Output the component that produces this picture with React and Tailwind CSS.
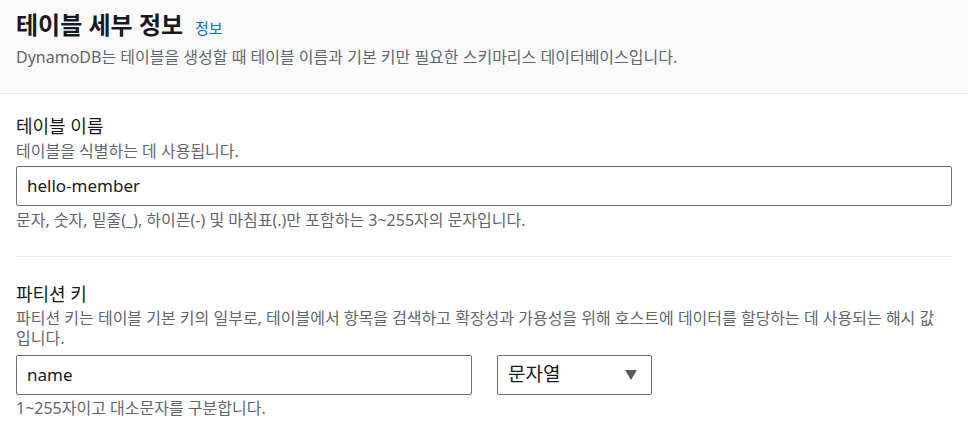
import React from "react";

function Caret() {
  return (
    <svg width="12" height="10" viewBox="0 0 12 10" className="shrink-0">
      <polygon points="0,0 12,0 6,10" fill="#545b64" />
    </svg>
  );
}

export default function App() {
  return (
    <div
      className="w-[968px] h-[430px] bg-white text-[#16191f] overflow-hidden"
      style={{ fontFamily: '"Noto Sans", "Noto Sans CJK KR", sans-serif' }}
    >
      {/* 헤더 */}
      <div className="bg-[#fafafa] border-b border-[#eaeded] px-4 pt-[11px] pb-[26px]">
        <div className="flex items-baseline gap-3">
          <h2 className="text-[24px] leading-[28px] font-bold">테이블 세부 정보</h2>
          <span className="text-[15px] text-[#0073bb]">정보</span>
        </div>
        <p className="mt-[7px] text-[16px] leading-[20px] text-[#5f6670]">
          DynamoDB는 테이블을 생성할 때 테이블 이름과 기본 키만 필요한 스키마리스 데이터베이스입니다.
        </p>
      </div>

      {/* 본문 */}
      <div className="px-4 pt-5">
        <div>
          <div className="text-[18px] leading-[24px]">테이블 이름</div>
          <div className="mt-[3px] text-[16px] leading-[20px] text-[#5f6670]">
            테이블을 식별하는 데 사용됩니다.
          </div>
          <div className="mt-[5px] h-10 border border-[#687078] rounded-[2px] flex items-center px-[10px] text-[17px]">
            hello-member
          </div>
          <div className="mt-1 text-[16px] leading-[20px] text-[#5f6670]">
            문자, 숫자, 밑줄(_), 하이픈(-) 및 마침표(.)만 포함하는 3~255자의 문자입니다.
          </div>
        </div>

        <div className="mt-[26px] border-t border-[#eaeded]"></div>

        <div className="mt-[25px]">
          <div className="text-[18px] leading-[24px]">파티션 키</div>
          <div className="mt-[2px] text-[16px] leading-[20px] text-[#5f6670]">
            파티션 키는 테이블 기본 키의 일부로, 테이블에서 항목을 검색하고 확장성과 가용성을 위해 호스트에 데이터를 할당하는 데 사용되는 해시 값 입니다.
          </div>
          <div className="mt-[7px] flex gap-[25px]">
            <div className="w-[456px] h-10 border border-[#687078] rounded-[2px] flex items-center px-[10px] text-[17px]">
              name
            </div>
            <div className="w-[155px] h-10 border border-[#687078] rounded-[2px] flex items-center justify-between pl-[10px] pr-[14px] text-[19px]">
              <span>문자열</span>
              <Caret />
            </div>
          </div>
          <div className="mt-[3px] text-[16px] leading-[20px] text-[#5f6670]">
            1~255자이고 대소문자를 구분합니다.
          </div>
        </div>
      </div>
    </div>
  );
}
